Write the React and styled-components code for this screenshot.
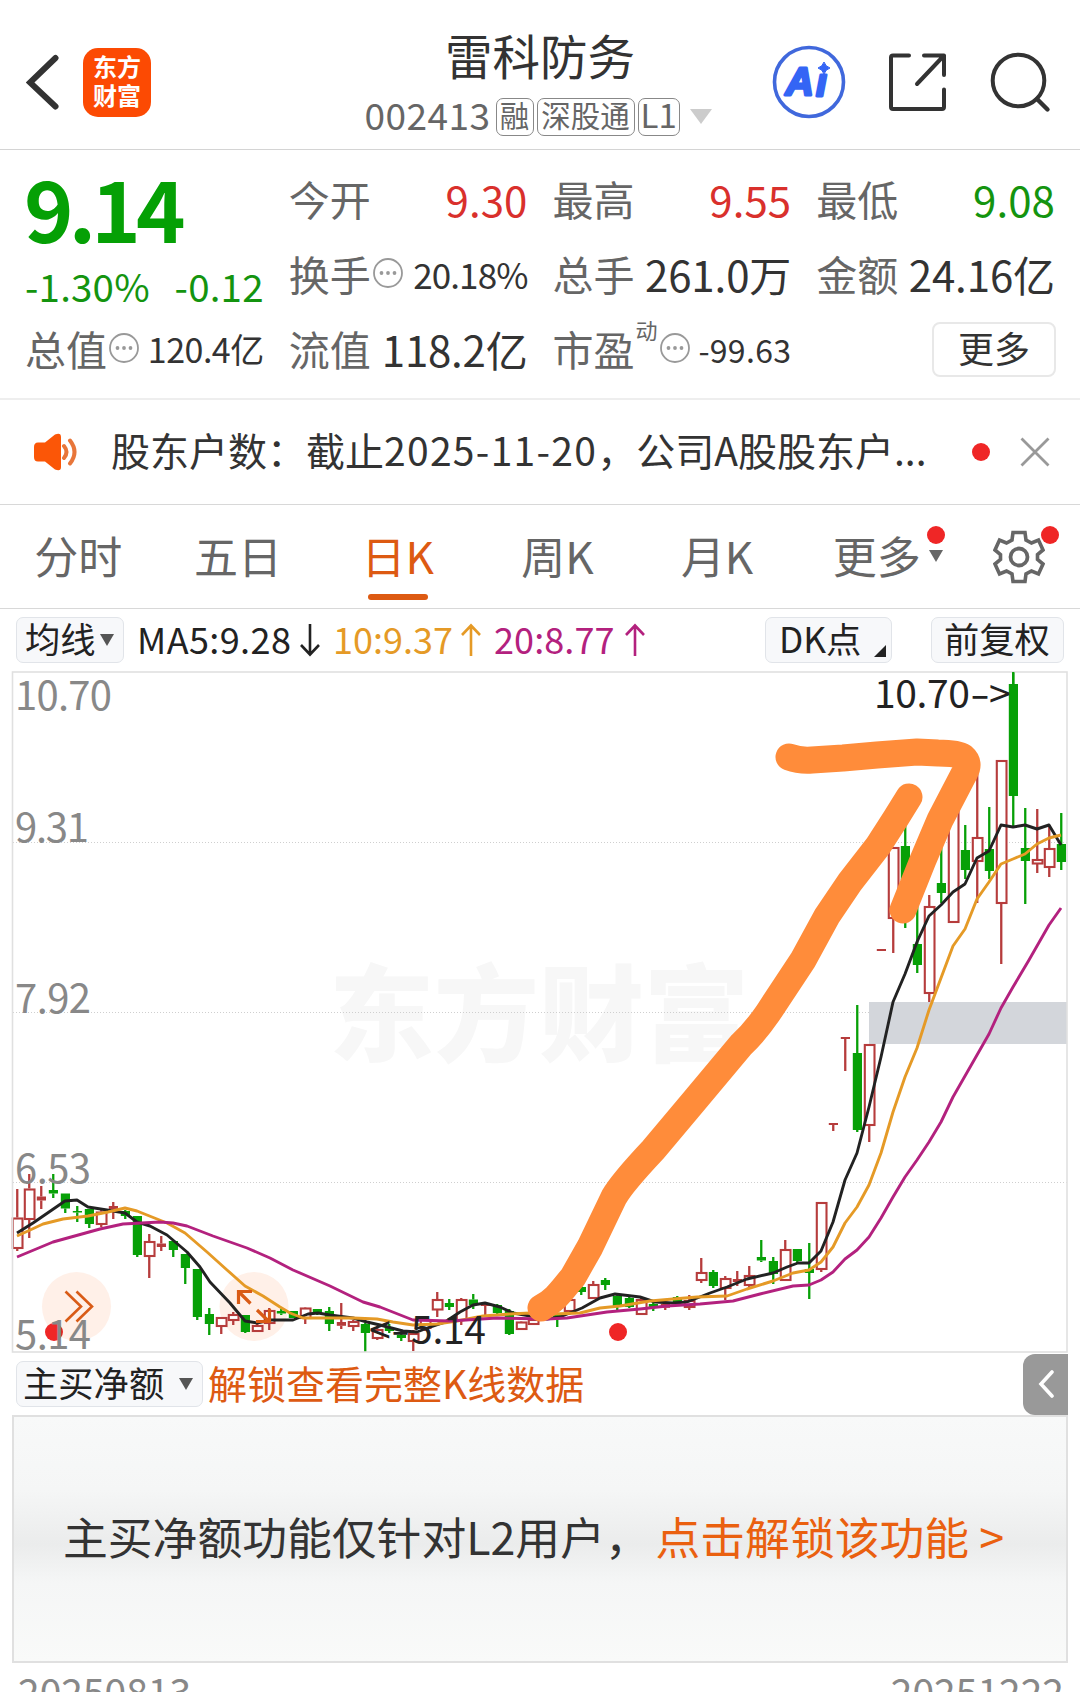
import React, { useState } from 'react';
import styled, { createGlobalStyle } from 'styled-components';

const GlobalStyle = createGlobalStyle`
  * { box-sizing: border-box; }
  body {
    margin: 0;
    background: #fff;
    overflow: hidden;
    font-family: "Noto Sans CJK SC", "Noto Sans", sans-serif;
  }
`

const RED = '#d9302c';
const GREEN = '#14940f';
const UP = '#b63c3c';
const DOWN = '#07a007';

const QUOTES = [
  { label: '今开', value: '9.30', color: RED, size: 42, spacing: 0.1 },
  { label: '最高', value: '9.55', color: RED, size: 42, spacing: 0.1 },
  { label: '最低', value: '9.08', color: GREEN, size: 42, spacing: 0.1 },
  { label: '换手', value: '20.18%', info: true, size: 35, spacing: -0.9 },
  { label: '总手', value: '261.0万', size: 42, spacing: -0.1 },
  { label: '金额', value: '24.16亿', size: 42, spacing: -0.1 },
];

const TABS = ['分时', '五日', '日K', '周K', '月K', '更多'];

// [up, high, bodyTop, bodyBottom, low] for every trading day, 12px apart
const CANDLES = [
  [1, 1189, 1217.5, 1248, 1251], [1, 1174, 1188.5, 1219, 1238], [1, 1186, 1196.5, 1200.5, 1209],
  [0, 1174, 1190, 1193.5, 1198], [0, 1193.5, 1193.5, 1208.5, 1213], [0, 1206, 1211, 1212.5, 1222],
  [0, 1209, 1209, 1224, 1228], [1, 1210, 1211.5, 1224, 1227], [1, 1202, 1206, 1209, 1219],
  [0, 1210, 1211, 1216, 1219], [0, 1216, 1216, 1255, 1257], [1, 1234, 1241, 1256, 1278],
  [1, 1236, 1243.5, 1247, 1251], [0, 1241, 1241, 1250, 1257], [0, 1254, 1254, 1268, 1284],
  [0, 1269, 1269, 1317, 1320], [0, 1308, 1314, 1324, 1335], [1, 1317, 1317, 1326, 1334],
  [1, 1312, 1314, 1320, 1325], [0, 1315, 1315, 1332, 1333], [1, 1322, 1325, 1331, 1331],
  [1, 1308, 1310, 1323, 1330], [0, 1309, 1311, 1313.5, 1315], [0, 1311, 1311, 1318, 1318],
  [1, 1307, 1307.5, 1318, 1324], [0, 1309, 1309, 1314, 1315], [0, 1307, 1311, 1324, 1331],
  [1, 1303, 1322, 1325.8, 1329], [1, 1320, 1321, 1326, 1331], [0, 1323, 1324, 1333, 1352],
  [1, 1326, 1329, 1338, 1340], [0, 1324, 1327, 1331, 1333], [0, 1333, 1335, 1338, 1341],
  [1, 1330, 1333, 1341, 1351], [1, 1318, 1319, 1328, 1331], [1, 1292, 1299, 1309.5, 1317],
  [0, 1299, 1303, 1307, 1310], [1, 1298, 1299, 1320, 1325], [0, 1294, 1299.5, 1305, 1309],
  [1, 1303, 1304, 1306, 1315], [0, 1304, 1305, 1313, 1314], [0, 1309, 1311, 1334, 1335],
  [1, 1321, 1321.5, 1329, 1329], [1, 1318, 1319, 1324, 1324], [0, 1310, 1312, 1316, 1318],
  [0, 1314, 1314, 1317, 1327], [1, 1298, 1299, 1311, 1315], [0, 1285, 1287, 1292, 1295],
  [1, 1281, 1284, 1298, 1299], [0, 1278, 1280, 1285, 1290], [0, 1295, 1296, 1306, 1310],
  [0, 1297, 1298, 1307, 1308], [1, 1297, 1299, 1314, 1314], [0, 1302, 1304, 1308, 1311],
  [1, 1299, 1304, 1307.8, 1310], [0, 1296, 1297, 1303, 1305], [1, 1295, 1300, 1307, 1310],
  [1, 1258, 1272, 1280, 1283], [0, 1270, 1272, 1286, 1288], [1, 1276, 1278, 1288, 1300],
  [1, 1271, 1279, 1282, 1286], [1, 1266, 1275, 1285, 1288], [0, 1240, 1257, 1260.5, 1262],
  [0, 1257, 1261, 1274, 1284], [1, 1240, 1249, 1280, 1281], [0, 1249, 1249, 1261, 1264],
  [0, 1243, 1269, 1273, 1299], [1, 1202, 1202, 1269, 1272], [1, 1124, 1123, 1125, 1131],
  [1, 1038, 1037, 1039, 1071], [0, 1005, 1053, 1130, 1132], [1, 1044, 1044, 1125, 1142],
  [1, 950, 949, 951, 950], [1, 847, 847, 918, 953], [0, 820, 846, 880, 928],
  [0, 900, 944, 965, 973], [1, 895, 906, 993, 1002], [0, 840, 883, 893, 903],
  [1, 810, 810, 922, 922], [0, 825, 850, 870, 879], [1, 770, 837, 861, 903],
  [0, 807, 849, 871, 879], [1, 760, 760, 903, 964], [0, 672, 684, 796, 826],
  [0, 808, 848, 861, 904], [1, 809, 859, 863.5, 873], [1, 825, 848, 867, 877],
  [0, 813, 844, 862, 870],
];

const MA5 = '17,1233 33,1223 65,1201 77,1200 88,1207 107,1210 125,1213 137,1222 150,1226 167,1235 187,1252 200,1267 210,1282 230,1303 245,1321 257,1323 270,1320 293,1320 308,1314 318,1313 330,1315 353,1318 367,1322 380,1325 403,1331 417,1332 430,1327 445,1322 460,1312 473,1305 485,1303 500,1307 513,1313 530,1316 547,1319 560,1317 582,1308 600,1298 615,1294 640,1297 655,1302 673,1303 687,1302 710,1293 727,1287 747,1279 773,1273 787,1267 798,1263 809,1263 821,1251 833,1222 845,1180 857,1153 869,1107 881,1057 893,1002 905,974 917,942 929,916 941,905 953,892 965,884 977,858 989,851 1001,825 1013,827 1025,825 1037,829 1049,825 1061,845';
const MA10 = '17,1236 28,1231 43,1224 63,1219 88,1216 108,1212 125,1208 137,1211 167,1223 185,1233 207,1252 227,1270 245,1286 263,1296 280,1307 290,1313 303,1318 353,1318 377,1319 393,1322 413,1325 437,1324 457,1321 483,1316 510,1314 530,1313 553,1314 580,1313 600,1308 620,1306 650,1301 673,1299 697,1297 727,1296 747,1289 773,1281 793,1273 809,1270 821,1262 833,1247 845,1223 857,1207 869,1185 881,1153 893,1112 905,1077 917,1048 929,1010 941,978 953,946 965,929 977,899 989,882 1001,864 1013,859 1025,854 1037,844 1049,838 1061,835';
const MA20 = '17,1257 53,1242 100,1229 123,1224 160,1222 173,1223 187,1226 213,1236 247,1248 270,1258 293,1270 330,1286 363,1302 380,1307 413,1320 450,1321 497,1318 547,1319 567,1318 607,1312 640,1309 667,1306 700,1304 733,1301 760,1294 793,1286 809,1285 821,1280 833,1272 845,1259 857,1250 869,1237 881,1218 893,1197 905,1177 917,1160 929,1142 941,1122 953,1097 977,1055 989,1034 1001,1008 1013,987 1029,960 1049,925 1061,908';

function Candle({ index, data }) {
  const [up, high, top, bottom, low] = data;
  const x = 17.2 + index * 12;
  const color = up ? UP : DOWN;
  const hollow = up && bottom - top > 4;

  return (
    <g>
      {high < top && <rect x={x - 1.1} y={high} width="2.3" height={top - high} fill={color} />}
      {low > bottom && <rect x={x - 1.1} y={bottom} width="2.3" height={low - bottom} fill={color} />}
      {hollow
        ? <rect x={x - 4.4} y={top + 1} width="9.7" height={bottom - top - 1} fill="#fff" stroke={color} strokeWidth="2.1" />
        : <rect x={x - 4.4} y={top} width="9.2" height={bottom - top} fill={color} />}
    </g>
  )
}

function KLineChart() {
  return (
    <ChartSvg viewBox="0 671 1080 682">
      <ChartText x="329" y="1053" fontSize="105" fontWeight="900" fill="#f7f7f7" textLength="420">东方财富</ChartText>
      {[842.5, 1012.5, 1182.5].map((y) => (
        <line key={y} x1="13" x2="1067" y1={y} y2={y} stroke="#cfcfcf" strokeDasharray="1 2" />
      ))}
      <rect x="869" y="1002" width="198" height="42" fill="#d3d6db" />

      <circle cx="76.5" cy="1306.5" r="34.5" fill="#fff0e8" />
      <circle cx="254" cy="1306.5" r="34.5" fill="#fff0e8" />
      <circle cx="54" cy="1332" r="9" fill="#ef2626" />
      <circle cx="618" cy="1332" r="9" fill="#ef2626" />
      <path d="M65.5 1291.5 81 1306.5 65.5 1321.5M76.5 1291.5 92 1306.5 76.5 1321.5" fill="none" stroke="#d95b16" strokeWidth="2.6" />

      {CANDLES.map((c, i) => <Candle key={i} index={i} data={c} />)}
      <MaLine points={MA5} stroke="#222" />
      <MaLine points={MA10} stroke="#e59a26" />
      <MaLine points={MA20} stroke="#b3217e" />
      <path d="M238.5 1304v-12.5H252M239 1292l11.5 11.5M257 1310l12 11.5M256 1321.5h13.5V1309" fill="none" stroke="#d95b16" strokeWidth="3.2" />

      <rect x="12.5" y="672" width="1054.5" height="680" fill="none" stroke="#e0e0e0" strokeWidth="1.6" />
      <rect x="1012.1" y="672" width="2.3" height="12" fill={DOWN} />

      <ChartText x="15" y="710" textLength="97">10.70</ChartText>
      <ChartText x="15" y="842" textLength="74">9.31</ChartText>
      <ChartText x="15" y="1013" textLength="76">7.92</ChartText>
      <ChartText x="15" y="1183" textLength="76">6.53</ChartText>
      <ChartText x="15" y="1349" textLength="76">5.14</ChartText>
      <ChartText x="874" y="708" fontSize="39" fill="#222" textLength="96">10.70</ChartText>
      <ChartText x="970" y="708" fontSize="39" fill="#222" textLength="20" lengthAdjust="spacingAndGlyphs">-</ChartText>
      <ChartText x="989" y="708" fontSize="39" fill="#222">&gt;</ChartText>
      <ChartText x="369" y="1344" fontSize="39" fill="#222">&lt;</ChartText>
      <ChartText x="391" y="1344" fontSize="39" fill="#222" textLength="19" lengthAdjust="spacingAndGlyphs">-</ChartText>
      <ChartText x="411" y="1344" fontSize="39" fill="#222" textLength="75">5.14</ChartText>

      <Marker d="M541 1308C556 1300 562 1290 573 1277L590 1247 614 1197Q622 1183 653 1150L695 1100 741 1045Q755 1032 768 1013L803 960 827 916 850 882 878 846 896 818 909 797" />
      <Marker d="M789 757Q800 761 812 760L843 758 877 755 917 752 938 753Q957 753 963 757 970 763 965 772L940 820 923 860 903 910" />
    </ChartSvg>
  )
}

function Quote({ label, value, color, info, size, spacing }) {
  return (
    <QuoteCell>
      <QuoteLabel>{label}</QuoteLabel>
      {info && <InfoDot />}
      <QuoteValue $color={color} $size={size} $spacing={spacing}>{value}</QuoteValue>
    </QuoteCell>
  )
}

function InfoDot() {
  return (
    <InfoSvg width="32" height="32" viewBox="0 0 32 32">
      <circle cx="16" cy="16" r="14" fill="none" stroke="#999" strokeWidth="1.8" />
      <circle cx="9.5" cy="16" r="1.9" fill="#999" />
      <circle cx="16" cy="16" r="1.9" fill="#999" />
      <circle cx="22.5" cy="16" r="1.9" fill="#999" />
    </InfoSvg>
  )
}

function MaValue({ color, text, width, spacing, up }) {
  return (
    <MaItem $color={color} $width={width} $spacing={spacing}>
      {text}
      <svg width="20" height="34" viewBox="0 0 20 34">
        <path
          d={up ? 'M10 33V3M1 12l9-9.5 9 9.5' : 'M10 1v30M1 22l9 9.5 9-9.5'}
          fill="none"
          stroke="currentColor"
          strokeWidth="2.6"
        />
      </svg>
    </MaItem>
  )
}

export default function App() {
  // currently selected chart period
  const [tab, setTab] = useState('日K');

  return (
    <Screen>
      <GlobalStyle />

      <Header>
        <HeaderSide>
          <svg width="34" height="56" viewBox="0 0 34 56">
            <path d="M29.5 4 4 28.5l25.5 24" fill="none" stroke="#333" strokeWidth="6" strokeLinecap="round" />
          </svg>
          <Logo><span>东方</span><span>财富</span></Logo>
        </HeaderSide>
        <TitleBlock>
          <StockName>雷科防务</StockName>
          <CodeRow>
            <StockCode>002413</StockCode>
            <Tag $width={38}>融</Tag>
            <Tag $width={98}>深股通</Tag>
            <Tag $width={42} $size={33}>L1</Tag>
            <Triangle $w={11} $h={15} $color="#ccc" $left={7} />
          </CodeRow>
        </TitleBlock>
        <HeaderIcons>
          <svg width="74" height="74" viewBox="0 0 74 74">
            <circle cx="37" cy="37" r="34.5" fill="none" stroke="#4068dc" strokeWidth="3.6" />
            <path d="M52 17Q53.5 21.5 58 23 53.5 24.5 52 29 50.5 24.5 46 23 50.5 21.5 52 17Z" fill="#3465f5" stroke="#3465f5" />
            <AiText x="13.5" y="50">A</AiText>
            <AiText x="44" y="51">ı</AiText>
          </svg>
          <svg width="60" height="60" viewBox="0 0 60 60">
            <path d="M21 3.5H5Q3 3.5 3 5.5V55Q3 57 5 57H54Q56 57 56 55V37.5M36 3.5H56V23M56 3.5 29 32" fill="none" stroke="#333" strokeWidth="4" strokeLinecap="round" strokeLinejoin="round" />
          </svg>
          <svg width="62" height="62" viewBox="0 0 62 62">
            <circle cx="29.5" cy="29.5" r="25.8" fill="none" stroke="#333" strokeWidth="4" />
            <path d="M48 48 58.5 58.5" stroke="#333" strokeWidth="4.4" strokeLinecap="round" />
          </svg>
        </HeaderIcons>
      </Header>

      <QuotePanel>
        <PriceBlock>
          <Price>9.14</Price>
          <Change><span>-1.30%</span><span>-0.12</span></Change>
        </PriceBlock>
        {QUOTES.map((q) => <Quote key={q.label} {...q} />)}
        <Quote label="总值" value="120.4亿" info size={34} spacing={-0.5} />
        <Quote label="流值" value="118.2亿" size={42} spacing={-0.2} />
        <QuoteCell>
          <QuoteLabel>市盈</QuoteLabel>
          <Dynamic>动</Dynamic>
          <InfoDot />
          <QuoteValue $size={32} $spacing={0.3}>-99.63</QuoteValue>
        </QuoteCell>
        <MoreButton>更多</MoreButton>
      </QuotePanel>

      <Notice>
        <svg width="46" height="38" viewBox="0 0 46 38">
          <path d="M5 9.5H12L22 1.5Q28 -1 28 4V34Q28 39 22 36.5L12 28.5H5Q1 28.5 1 24V14Q1 9.5 5 9.5Z" fill="#fb5607" />
          <path d="M31 13Q36 19 31 25M37 7.5Q46 19 37 30.5" fill="none" stroke="#e8763a" strokeWidth="4" strokeLinecap="round" />
        </svg>
        <NoticeText>股东户数：截止<NoticeDate>2025-11-20</NoticeDate>，公司A股股东户...</NoticeText>
        <RedDot />
        <svg width="30" height="30" viewBox="0 0 30 30">
          <path d="M1.5 1.5l27 27M28.5 1.5l-27 27" stroke="#999" strokeWidth="2.8" />
        </svg>
      </Notice>

      <TabBar>
        {TABS.map((t) => (
          <Tab key={t} $active={t === tab} onClick={() => setTab(t)}>
            {t}
            {t === '更多' && <TabArrow><RedDot /><Triangle $w={7} $h={12} $color="#666" /></TabArrow>}
          </Tab>
        ))}
        <GearButton>
          <svg width="52" height="54" viewBox="0 0 52 54">
            <path
              d="M20 2.5H32L33 10 38.5 13 45.5 10 50 20 44.5 24.5V29.5L50 34 45.5 44 38.5 41 33 44 32 51.5H20L19 44 13.5 41 6.5 44 2 34 7.5 29.5V24.5L2 20 6.5 10 13.5 13 19 10Z"
              fill="none" stroke="#666" strokeWidth="3.6"
            />
            <circle cx="26" cy="27" r="8.5" fill="none" stroke="#666" strokeWidth="3.8" />
          </svg>
          <GearDot />
        </GearButton>
      </TabBar>

      <MaBar>
        <Chip $width={108} $pad={8}>均线<Triangle $w={7} $h={12} $color="#555" $left={4} /></Chip>
        <MaValues>
          <MaValue color="#222" text="MA5:9.28" width={183} spacing={0.4} />
          <MaValue color="#e59a26" text="10:9.37" width={148} up />
          <MaValue color="#b3217e" text="20:8.77" width={151} spacing={0.1} up />
        </MaValues>
        <Chip $width={127} $pad={13}>DK点<Corner /></Chip>
        <Chip $width={133} $pad={12} $left={39}>前复权</Chip>
      </MaBar>

      <KLineChart />

      <SubBar>
        <Chip $width={187} $pad={6}>主买净额<Triangle $w={7} $h={12} $color="#555" $left={15} /></Chip>
        <UnlockText>解锁查看完整K线数据</UnlockText>
        <CollapseTab>
          <svg width="18" height="28" viewBox="0 0 18 28">
            <path d="M15 2 4 14l11 12" fill="none" stroke="#fff" strokeWidth="3.6" strokeLinecap="round" />
          </svg>
        </CollapseTab>
      </SubBar>

      <LockedPanel>
        <span>主买净额功能仅针对L2用户，</span>
        <UnlockLink>点击解锁该功能 &gt;</UnlockLink>
      </LockedPanel>

      <DateRow><span>20250813</span><span>20251222</span></DateRow>
    </Screen>
  )
}

const Screen = styled.div`
  width: 1080px;
  height: 1692px;
  overflow: hidden;
  display: flex;
  flex-direction: column;
  background: #fff;
  color: #333;
  line-height: 1;
  white-space: nowrap;
`

const Header = styled.header`
  height: 150px;
  flex: none;
  display: grid;
  grid-template-columns: 337px 1fr 337px;
  border-bottom: 1px solid #d4d4d4;
`

const HeaderSide = styled.div`
  display: flex;
  align-items: center;
  gap: 23px;
  padding: 15px 0 0 26px;
`

const Logo = styled.div`
  width: 68px;
  height: 69px;
  border-radius: 15px;
  background: #fc4a03;
  color: #fff;
  display: flex;
  flex-direction: column;
  align-items: center;
  justify-content: center;
  padding-bottom: 4px;
  font-size: 24px;
  font-weight: 700;
  line-height: 29px;
`

const TitleBlock = styled.div`
  display: flex;
  flex-direction: column;
  align-items: center;
  padding-top: 31px;
`

const StockName = styled.div`
  font-size: 47.5px;
`

const CodeRow = styled.div`
  display: flex;
  align-items: center;
  gap: 5px;
  margin-top: 19px;
  padding-right: 4px;
`

const StockCode = styled.span`
  font-size: 37px;
  letter-spacing: 0.5px;
  line-height: 37px;
  color: #666;
  margin-top: -5px;
`

const Tag = styled.span`
  width: ${(p) => p.$width}px;
  height: 38px;
  border: 1.5px solid #888;
  border-radius: 7px;
  display: flex;
  justify-content: center;
  font-size: ${(p) => p.$size || 29.5}px;
  line-height: ${(p) => (p.$size ? 31 : 31)}px;
  color: #666;
  margin-right: -2px;
`

const Triangle = styled.i`
  border-left: ${(p) => p.$w}px solid transparent;
  border-right: ${(p) => p.$w}px solid transparent;
  border-top: ${(p) => p.$h}px solid ${(p) => p.$color};
  margin-left: ${(p) => p.$left || 0}px;
`

const HeaderIcons = styled.div`
  display: flex;
  align-items: center;
  justify-content: flex-end;
  gap: 41px;
  padding: 15px 29px 0 0;

  svg:first-child {
    margin-right: 1px;
  }
`

const AiText = styled.text`
  font-family: "Liberation Sans", sans-serif;
  font-size: 39px;
  font-weight: 700;
  font-style: italic;
  fill: #3465f5;
  stroke: #3465f5;
  stroke-width: 2.8;
  stroke-linejoin: round;
`

const QuotePanel = styled.section`
  height: 250px;
  flex: none;
  display: grid;
  grid-template-columns: repeat(4, 1fr);
  grid-template-rows: repeat(3, 75px);
  column-gap: 25px;
  padding: 12px 25px 0;
  border-bottom: 2px solid #eee;
`

const PriceBlock = styled.div`
  grid-row: span 2;
  color: ${GREEN};
`

const Price = styled.div`
  font-size: 84px;
  font-weight: 700;
  color: #05a005;
  letter-spacing: -4.8px;
  padding-top: 3px;
  margin-left: -1px;
`

const Change = styled.div`
  display: flex;
  justify-content: space-between;
  font-size: 38.5px;
  margin-top: 17px;
  letter-spacing: 0.2px;
`

const QuoteCell = styled.div`
  height: 75px;
  display: flex;
  align-items: center;
`

const QuoteLabel = styled.span`
  font-size: 41px;
  color: #666;
  margin-top: -2px;
`

const InfoSvg = styled.svg`
  margin-top: -3px;
  margin-left: 1px;
`

const QuoteValue = styled.span`
  margin-left: auto;
  margin-top: -2px;
  font-size: ${(p) => p.$size || 43}px;
  letter-spacing: ${(p) => p.$spacing || 0}px;
  color: ${(p) => p.$color || '#333'};
`

const Dynamic = styled.sup`
  align-self: flex-start;
  width: 22px;
  font-size: 22px;
  line-height: 22px;
  color: #666;
  margin: 6px 0 0 1px;
  vertical-align: baseline;
`

const MoreButton = styled.button`
  width: 124px;
  height: 55px;
  justify-self: end;
  align-self: center;
  margin: -1px -1px 0 0;
  padding: 0 0 5px;
  border: 2px solid #e8e8e8;
  border-radius: 8px;
  background: #fff;
  color: #333;
  font-family: inherit;
  font-size: 36px;
  line-height: 1;
`

const Notice = styled.section`
  height: 105px;
  flex: none;
  display: flex;
  align-items: center;
  padding: 0 30px 0 33px;
  border-bottom: 1px solid #d8d8d8;
`

const NoticeText = styled.div`
  flex: 1;
  margin-left: 32px;
  padding-bottom: 5px;
  font-size: 39px;
`

const NoticeDate = styled.span`
  letter-spacing: 1.3px;
`

const RedDot = styled.i`
  width: 18px;
  height: 18px;
  border-radius: 50%;
  background: #ef2626;
  margin-right: 30px;
`

const TabBar = styled.nav`
  height: 104px;
  flex: none;
  display: grid;
  grid-template-columns: repeat(6, 159.7px) 1fr;
  border-bottom: 1px solid #d8d8d8;
`

const Tab = styled.div`
  position: relative;
  display: flex;
  align-items: center;
  justify-content: center;
  font-size: 44px;
  padding: 0 3px 4px 0;
  color: ${(p) => (p.$active ? '#dd5a12' : '#666')};

  &::after {
    content: '';
    display: ${(p) => (p.$active ? 'block' : 'none')};
    position: absolute;
    bottom: 8px;
    width: 60px;
    height: 6px;
    border-radius: 3px;
    background: #dd5a12;
  }
`

const TabArrow = styled.span`
  position: absolute;
  left: 129px;
  top: 21px;
  display: flex;
  flex-direction: column;
  align-items: center;
  gap: 6px;

  ${RedDot} {
    margin: 0;
  }
`

const GearButton = styled.div`
  position: relative;
  display: flex;
  align-items: center;
  justify-content: center;
  padding-right: 1px;
`

const GearDot = styled(RedDot)`
  position: absolute;
  top: 21px;
  left: 83px;
  margin: 0;
`

const MaBar = styled.div`
  height: 62px;
  flex: none;
  display: flex;
  align-items: center;
  padding: 0 16px 0 16px;
`

const Chip = styled.div`
  position: relative;
  width: ${(p) => p.$width}px;
  height: 46px;
  display: flex;
  align-items: center;
  flex: none;
  padding: 0 0 5px ${(p) => p.$pad}px;
  margin-left: ${(p) => p.$left || 0}px;
  border: 1.5px solid #e1e4e9;
  border-radius: 7px;
  background: #f7f8fa;
  color: #222;
  font-size: 35.3px;

  ${Triangle} {
    margin-top: 5px;
  }
`

const Corner = styled.i`
  position: absolute;
  right: 5px;
  bottom: 5px;
  border-left: 12px solid transparent;
  border-bottom: 12px solid #222;
`

const MaValues = styled.div`
  flex: 1;
  display: flex;
  gap: 13px;
  padding-left: 13px;
`

const MaItem = styled.span`
  width: ${(p) => p.$width}px;
  display: flex;
  align-items: center;
  justify-content: space-between;
  color: ${(p) => p.$color};
  font-size: 36px;
  line-height: 36px;
  letter-spacing: ${(p) => p.$spacing || 0}px;
  padding-bottom: 4px;

  svg {
    margin-top: 4px;
  }
`

const ChartSvg = styled.svg`
  width: 1080px;
  height: 682px;
  flex: none;
  display: block;
  overflow: visible;
`

const ChartText = styled.text.attrs((p) => ({
  fontSize: p.fontSize || 40,
  fill: p.fill || '#888',
}))``

const MaLine = styled.polyline`
  fill: none;
  stroke-width: 2.9;
  stroke-linejoin: round;
`

const Marker = styled.path`
  fill: none;
  stroke: #ff8c3a;
  stroke-width: 27;
  stroke-linecap: round;
  stroke-linejoin: round;
`

const SubBar = styled.div`
  height: 62px;
  flex: none;
  display: flex;
  align-items: center;
  padding: 0 12px 0 16px;
`

const UnlockText = styled.span`
  flex: 1;
  margin-left: 5px;
  padding-bottom: 4px;
  font-size: 39px;
  color: #dd5a12;
`

const CollapseTab = styled.div`
  width: 45px;
  height: 61px;
  display: flex;
  align-items: center;
  justify-content: center;
  background: #999;
  border-radius: 12px 0 0 12px;
`

const LockedPanel = styled.section`
  height: 248px;
  flex: none;
  display: flex;
  align-items: center;
  justify-content: space-between;
  margin: 0 12px;
  padding: 0 62px 6px 49px;
  border: 2px solid #e0e0e0;
  background: linear-gradient(#f8f9f9, #f5f6f6 30%, #ebecec 52%, #f5f6f6 68%, #f9faf9);
  font-size: 44.8px;
`

const UnlockLink = styled.a`
  color: #ea600f;
`

const DateRow = styled.footer`
  display: flex;
  justify-content: space-between;
  padding: 8px 16px 0 18px;
  font-size: 39px;
  color: #888;
`
